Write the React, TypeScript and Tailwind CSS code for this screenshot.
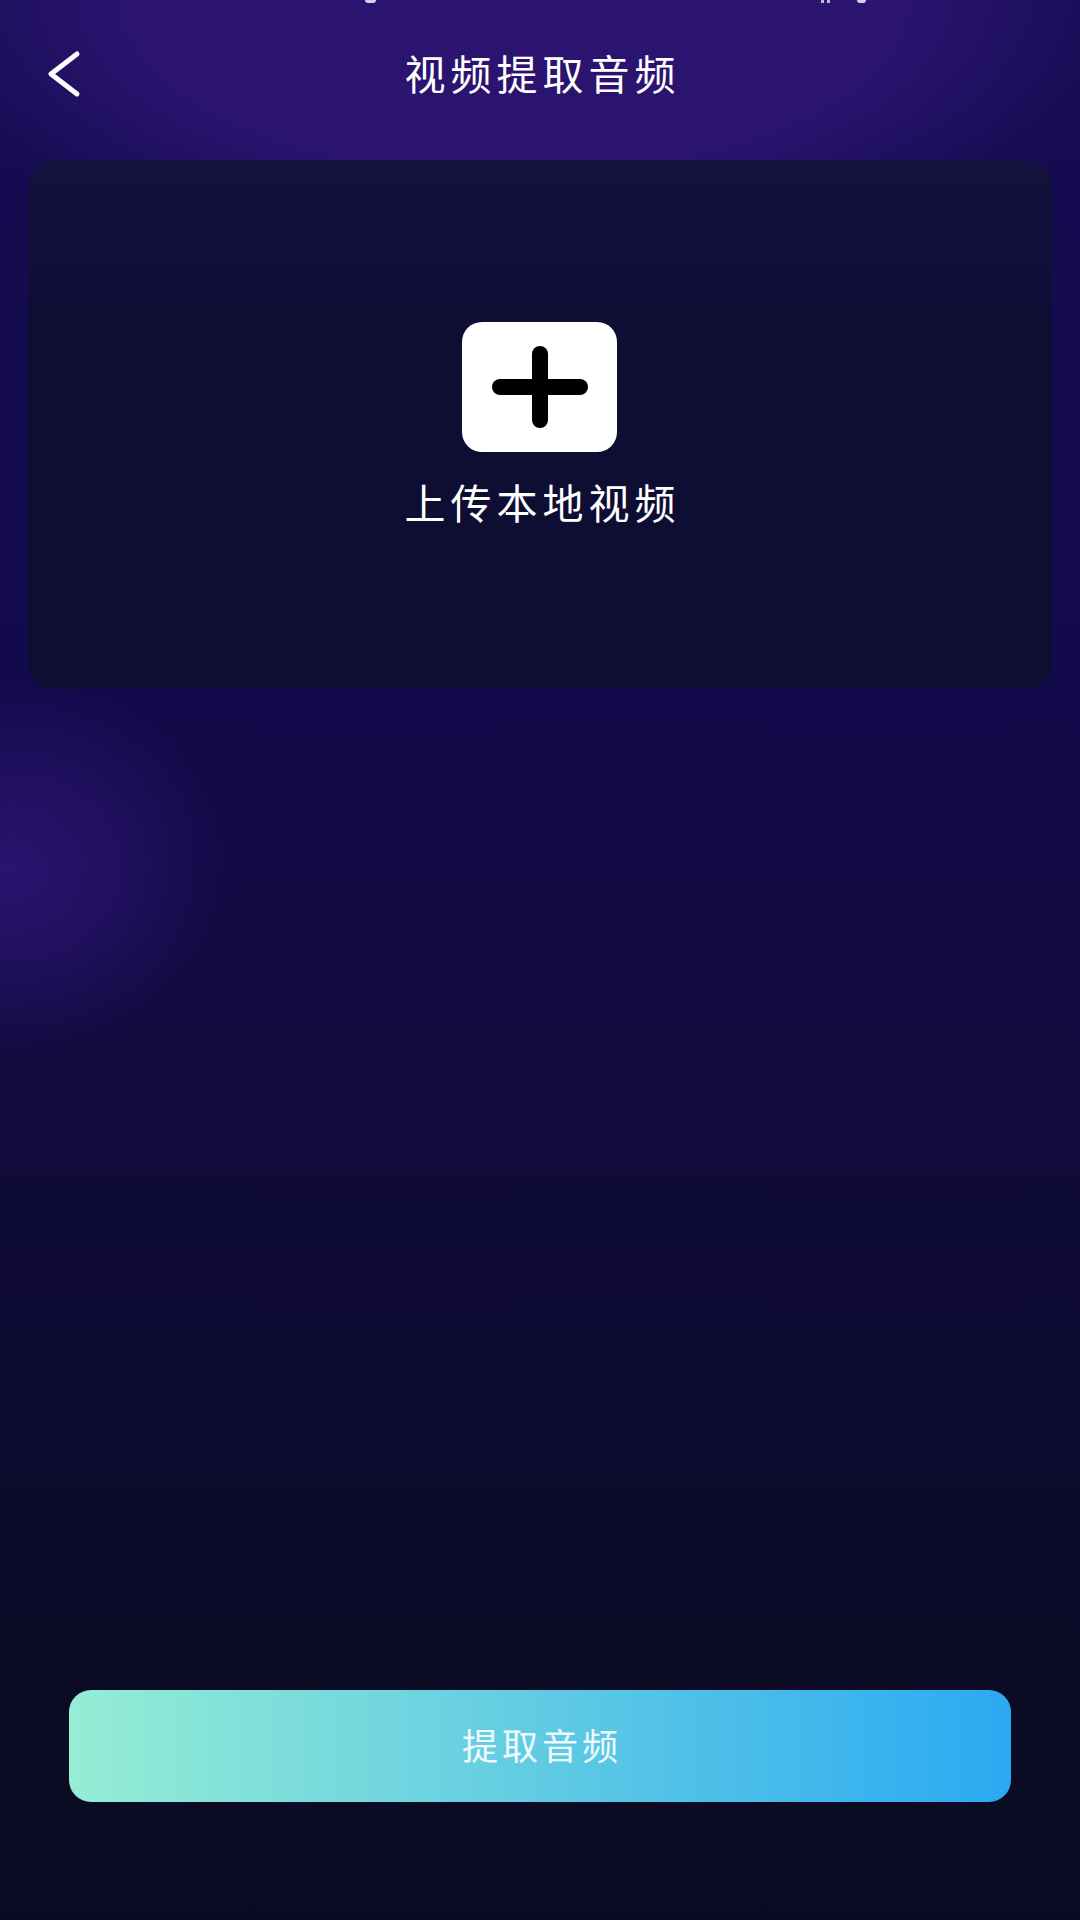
export default function App() {
  return (
    <div
      className="relative h-[1920px] w-[1080px] overflow-hidden bg-[linear-gradient(180deg,#150c52_0%,#130a4c_35%,#100b3a_60%,#0b0b26_88%,#0a0b22_100%)] font-['Noto_Sans_CJK_SC',sans-serif] text-white"
    >
      {/* background glows */}
      <div className="pointer-events-none absolute left-[-110px] top-[-280px] h-[560px] w-[1250px] rounded-[50%] bg-[radial-gradient(closest-side,#2a1470_0%,#2a1470_62%,#2a147000_100%)]" />
      <div className="pointer-events-none absolute left-[-210px] top-[680px] h-[380px] w-[440px] rounded-[50%] bg-[radial-gradient(closest-side,#2a1470_0%,#2a147088_55%,#2a147000_100%)]" />

      <div className="relative flex h-full flex-col">
        {/* bottom edge of the status bar text, cut off by the screen */}
        <div className="flex h-[3px] pl-[365px] blur-[0.5px]">
          <div className="w-[11px] rounded-b-full bg-white/80" />
          <div className="ml-[445px] w-[3px] bg-white/70" />
          <div className="ml-[3px] w-[3px] bg-white/70" />
          <div className="ml-[27px] w-[9px] rounded-b-full bg-white/80" />
        </div>

        {/* header */}
        <div className="relative flex h-[157px] items-start justify-center pl-[5px] pt-[42px]">
          <svg
            className="absolute left-[46px] top-[45px]"
            width="38"
            height="52"
            viewBox="0 0 38 52"
            fill="none"
            stroke="white"
            strokeWidth="5"
            strokeLinecap="round"
            strokeLinejoin="round"
          >
            <path d="M31 6 L5 26 L31 46" />
          </svg>
          <h1 className="text-[41px] font-normal leading-[54px] tracking-[5px]">视频提取音频</h1>
        </div>

        {/* upload card */}
        <div className="mx-[28px] flex h-[529px] flex-col items-center rounded-[26px] bg-[linear-gradient(180deg,#15113e_0%,#0e0d33_35%,#0e0d32_100%)] pt-[162px]">
          <div className="mr-[1px] flex h-[130px] w-[155px] items-center justify-center rounded-[20px] bg-white">
            <svg width="96" height="82" viewBox="0 0 96 82" fill="none" stroke="black" strokeWidth="16" strokeLinecap="round">
              <path d="M8 41 H88" />
              <path d="M48 8 V74" />
            </svg>
          </div>
          <p className="mt-[22px] pl-[5px] text-[41px] font-normal leading-[54px] tracking-[5px]">上传本地视频</p>
        </div>

        {/* extract button */}
        <div className="mt-auto px-[69px] pb-[118px]">
          <button
            type="button"
            className="flex h-[112px] w-full items-center justify-center rounded-[22px] bg-[linear-gradient(90deg,#95edd4_0%,#2ba9f2_100%)] pb-[5px] pl-[4px] text-[36px] font-normal tracking-[4px] text-white/90"
          >
            提取音频
          </button>
        </div>
      </div>
    </div>
  );
}
